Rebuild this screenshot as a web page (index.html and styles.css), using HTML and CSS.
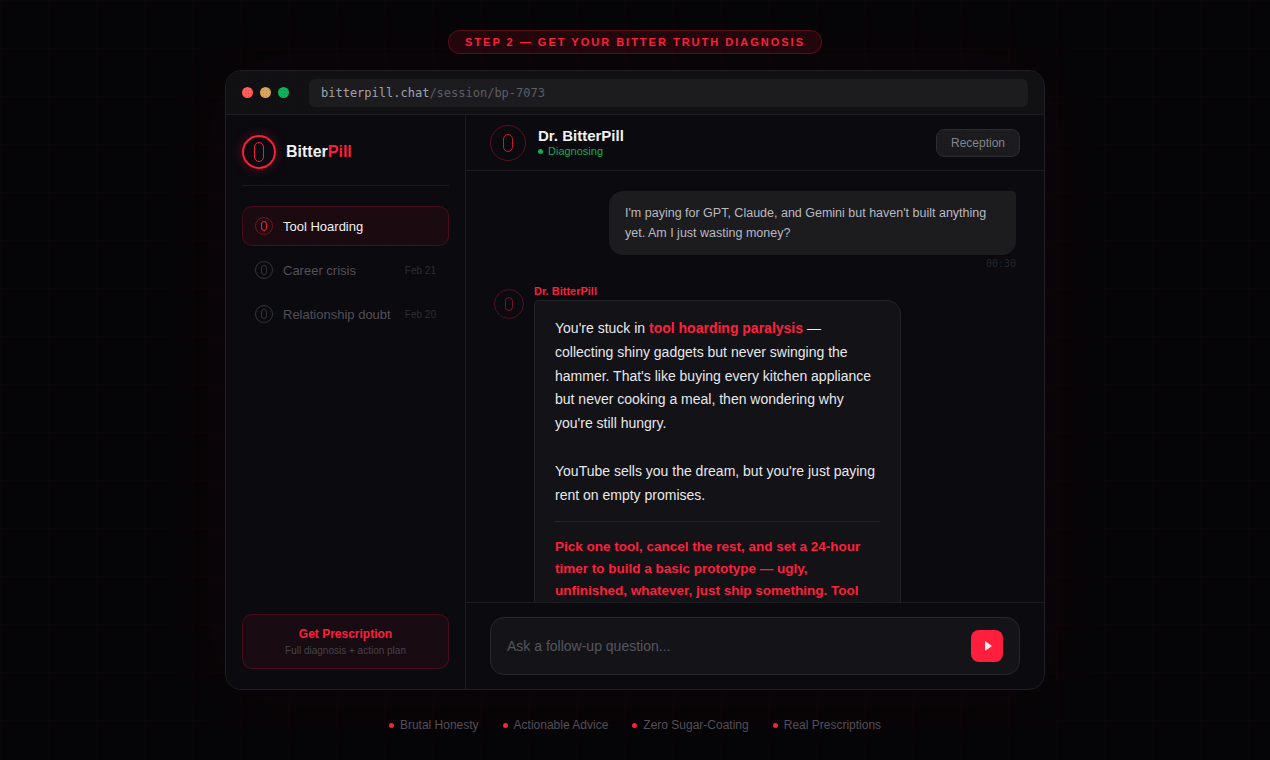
FILE: index.html
```html
<!DOCTYPE html>
<html>

<head>
    <meta content="text/html; charset=utf-8" http-equiv="Content-Type">
    <title>BitterPill demo</title>
    <link rel="stylesheet" href="styles.css">
</head>

<body>
    <div class="stepBadge">STEP 2 — GET YOUR BITTER TRUTH DIAGNOSIS</div>

    <div class="appWindow">
        <div class="titleBar">
            <span class="winDot dotRed"></span>
            <span class="winDot dotAmber"></span>
            <span class="winDot dotGreen"></span>
            <div class="urlBar">bitterpill.chat<span class="urlPath">/session/bp-7073</span></div>
        </div>

        <div class="appBody">
            <div class="sidebar">
                <div class="brand">
                    <span class="pillIcon brandIcon"><i></i></span>
                    <span class="brandName">Bitter<b>Pill</b></span>
                </div>

                <div class="sessionList">
                    <div class="sessionItem active">
                        <span class="pillIcon sessionIcon"><i></i></span>
                        <span class="sessionName">Tool Hoarding</span>
                    </div>
                    <div class="sessionItem">
                        <span class="pillIcon sessionIcon"><i></i></span>
                        <span class="sessionName">Career crisis</span>
                        <span class="sessionDate">Feb 21</span>
                    </div>
                    <div class="sessionItem">
                        <span class="pillIcon sessionIcon"><i></i></span>
                        <span class="sessionName">Relationship doubt</span>
                        <span class="sessionDate">Feb 20</span>
                    </div>
                </div>

                <div class="prescription">
                    <div class="prescriptionTitle">Get Prescription</div>
                    <div class="prescriptionSub">Full diagnosis + action plan</div>
                </div>
            </div>

            <div class="chat">
                <div class="chatHeader">
                    <span class="pillIcon doctorIcon"><i></i></span>
                    <div class="doctorInfo">
                        <div class="doctorName">Dr. BitterPill</div>
                        <div class="doctorStatus"><span class="statusDot"></span>Diagnosing</div>
                    </div>
                    <button class="receptionBtn">Reception</button>
                </div>

                <div class="messages">
                    <div class="userMessage">
                        <div class="userBubble">I'm paying for GPT, Claude, and Gemini but haven't built anything yet. Am I just wasting money?</div>
                        <div class="msgTime">00:30</div>
                    </div>

                    <div class="aiMessage">
                        <span class="pillIcon aiIcon"><i></i></span>
                        <div class="aiContent">
                            <div class="aiLabel">Dr. BitterPill</div>
                            <div class="aiBubble">
                                <p>You're stuck in <strong>tool hoarding paralysis</strong> — collecting shiny gadgets but never swinging the hammer. That's like buying every kitchen appliance but never cooking a meal, then wondering why you're still hungry.</p>
                                <p>YouTube sells you the dream, but you're just paying rent on empty promises.</p>
                                <div class="aiDivider"></div>
                                <p class="aiVerdict">Pick one tool, cancel the rest, and set a 24-hour timer to build a basic prototype — ugly, unfinished, whatever, just ship something. Tool</p>
                            </div>
                        </div>
                    </div>
                </div>

                <div class="inputArea">
                    <div class="inputBox">
                        <span class="inputPlaceholder">Ask a follow-up question...</span>
                        <button class="sendBtn">
                            <svg width="10" height="10" viewBox="0 0 10 10"><path d="M3 0 L10 5 L3 10 Z" fill="#eeeeee"/></svg>
                        </button>
                    </div>
                </div>
            </div>
        </div>
    </div>

    <div class="featureRow">
        <span class="feature">Brutal Honesty</span>
        <span class="feature">Actionable Advice</span>
        <span class="feature">Zero Sugar-Coating</span>
        <span class="feature">Real Prescriptions</span>
    </div>
</body>

</html>
```

FILE: styles.css
```css
* {
    box-sizing: border-box;
}

html, body {
    height: 100%;
}

body {
    margin: 0;
    height: 760px;
    overflow: hidden;
    padding-top: 30px;
    display: flex;
    flex-direction: column;
    align-items: center;
    font-family: "Liberation Sans", Arial, sans-serif;
    color: #f4f4f5;
    background-color: #050507;
    background-image:
        linear-gradient(rgba(255, 30, 60, 0.018) 1px, transparent 1px),
        linear-gradient(90deg, rgba(255, 30, 60, 0.018) 1px, transparent 1px);
    background-size: 48px 48px;
}

.stepBadge {
    height: 24px;
    line-height: 22px;
    padding: 0 16px;
    border: 1px solid rgba(255, 30, 60, 0.25);
    border-radius: 12px;
    background: rgba(255, 30, 60, 0.11);
    color: #ff1f3d;
    font-size: 11px;
    font-weight: 700;
    letter-spacing: 2px;
    white-space: nowrap;
}

.appWindow {
    position: relative;
    width: 820px;
    height: 620px;
    margin-top: 16px;
    flex-shrink: 0;
    display: flex;
    flex-direction: column;
    border: 1px solid #1f1f24;
    border-radius: 16px;
    overflow: hidden;
    background: #0a0a0f;
    box-shadow: 0 0 80px rgba(255, 30, 60, 0.05);
}

.appWindow::after {
    content: "";
    position: absolute;
    inset: 0;
    pointer-events: none;
    background-image: radial-gradient(rgba(0, 0, 0, 0.16) 1px, transparent 1px);
    background-size: 3px 3px;
}

.titleBar {
    height: 44px;
    flex-shrink: 0;
    display: flex;
    align-items: center;
    gap: 7px;
    padding: 0 16px;
    background: #111114;
    border-bottom: 1px solid #1f1f24;
}

.winDot {
    width: 11px;
    height: 11px;
    border-radius: 50%;
}

.dotRed {
    background: #ff5f57;
}

.dotAmber {
    background: #d9a55b;
}

.dotGreen {
    background: #12b05c;
}

.urlBar {
    position: relative;
    z-index: 1;
    flex: 1;
    height: 28px;
    line-height: 28px;
    margin-left: 13px;
    padding: 0 12px;
    border-radius: 6px;
    background: #1c1c1f;
    color: #a1a1aa;
    font-family: "DejaVu Sans Mono", monospace;
    font-size: 12px;
    white-space: nowrap;
}

.urlPath {
    color: #5c5c66;
}

.appBody {
    flex: 1;
    min-height: 0;
    display: flex;
}

.sidebar {
    width: 240px;
    flex-shrink: 0;
    display: flex;
    flex-direction: column;
    padding: 20px 16px;
    border-right: 1px solid #1c1c21;
    background: #0a0a0f;
}

.brand {
    display: flex;
    align-items: center;
    gap: 10px;
    padding-bottom: 16px;
    border-bottom: 1px solid #1c1c21;
}

.brandName {
    font-size: 16px;
    font-weight: 700;
    color: #f4f4f5;
}

.brandName b {
    color: #ff1f3d;
}

.pillIcon {
    display: flex;
    align-items: center;
    justify-content: center;
    flex-shrink: 0;
    border-radius: 50%;
    border: 1px solid #ff1f3d;
}

.pillIcon i {
    display: block;
    border: 1px solid #ff1f3d;
}

.brandIcon {
    width: 34px;
    height: 34px;
    border-width: 2px;
    box-shadow: 0 0 12px rgba(255, 30, 60, 0.3);
}

.brandIcon i {
    width: 10px;
    height: 20px;
    border-width: 1.5px;
    border-radius: 5px;
}

.sessionList {
    margin-top: 20px;
    display: flex;
    flex-direction: column;
    gap: 4px;
    flex: 1;
}

.sessionItem {
    height: 40px;
    display: flex;
    align-items: center;
    gap: 10px;
    padding: 0 12px;
    border: 1px solid transparent;
    border-radius: 10px;
    color: #54505a;
    font-size: 13px;
}

.sessionItem.active {
    background: rgba(255, 30, 60, 0.07);
    border-color: rgba(255, 30, 60, 0.2);
    color: #f4f4f5;
}

.sessionName {
    flex: 1;
    white-space: nowrap;
}

.sessionDate {
    color: #2e2e35;
    font-size: 10px;
    white-space: nowrap;
}

.sessionIcon {
    width: 18px;
    height: 18px;
    border-color: #34343b;
}

.sessionIcon i {
    width: 6px;
    height: 10px;
    border-color: #34343b;
    border-radius: 3px;
}

.active .sessionIcon {
    border-color: rgba(255, 30, 60, 0.4);
}

.active .sessionIcon i {
    border-color: #ff1f3d;
}

.prescription {
    position: relative;
    z-index: 1;
    height: 55px;
    padding-top: 12px;
    text-align: center;
    border: 1px solid rgba(255, 30, 60, 0.2);
    border-radius: 10px;
    background: rgba(255, 30, 60, 0.06);
}

.prescriptionTitle {
    color: #ff1f3d;
    font-size: 12px;
    font-weight: 700;
    line-height: 14px;
}

.prescriptionSub {
    margin-top: 3px;
    color: #44444e;
    font-size: 10px;
    line-height: 13px;
}

.chat {
    flex: 1;
    min-width: 0;
    display: flex;
    flex-direction: column;
}

.chatHeader {
    height: 56px;
    flex-shrink: 0;
    display: flex;
    align-items: center;
    gap: 12px;
    padding: 0 24px;
    border-bottom: 1px solid #1c1c21;
}

.doctorIcon {
    width: 36px;
    height: 36px;
    border-color: rgba(255, 30, 60, 0.35);
}

.doctorIcon i {
    width: 10px;
    height: 18px;
    border-color: rgba(255, 30, 60, 0.8);
    border-radius: 5px;
}

.doctorInfo {
    flex: 1;
}

.doctorName {
    font-size: 15px;
    font-weight: 700;
    line-height: 17px;
}

.doctorStatus {
    display: flex;
    align-items: center;
    gap: 5px;
    color: #12b05c;
    font-size: 11px;
    line-height: 14px;
}

.statusDot {
    width: 5px;
    height: 5px;
    border-radius: 50%;
    background: #12b05c;
}

.receptionBtn {
    width: 84px;
    height: 28px;
    padding: 0;
    border: 1px solid #2c2c32;
    border-radius: 8px;
    background: #1c1c1f;
    color: #85858f;
    font-family: inherit;
    font-size: 12px;
}

.messages {
    flex: 1;
    min-height: 0;
    overflow: hidden;
    padding: 20px 28px 0 28px;
}

.userMessage {
    display: flex;
    flex-direction: column;
    align-items: flex-end;
}

.userBubble {
    position: relative;
    z-index: 1;
    width: 407px;
    padding: 12px 16px;
    border-radius: 14px 4px 14px 14px;
    background: #1c1c1f;
    color: #b9b9c0;
    font-size: 12.5px;
    line-height: 20px;
}

.msgTime {
    margin-top: 2px;
    color: #26262d;
    font-family: "DejaVu Sans Mono", monospace;
    font-size: 10px;
    line-height: 14px;
}

.aiMessage {
    display: flex;
    gap: 10px;
    margin-top: 13px;
}

.aiIcon {
    width: 30px;
    height: 30px;
    margin-top: 5px;
    border-color: rgba(255, 30, 60, 0.3);
}

.aiIcon i {
    width: 8px;
    height: 14px;
    border-color: rgba(255, 30, 60, 0.45);
    border-radius: 4px;
}

.aiLabel {
    color: #ff1f3d;
    font-size: 11px;
    font-weight: 700;
    line-height: 14px;
    margin-bottom: 2px;
}

.aiBubble {
    position: relative;
    z-index: 1;
    width: 367px;
    height: 320px;
    padding: 16px 20px;
    border: 1px solid #232328;
    border-radius: 4px 14px 14px 14px;
    background: #121217;
    font-size: 14px;
    line-height: 23.8px;
    color: #e8e8ea;
}

.aiBubble p {
    margin: 0 0 24px 0;
}

.aiBubble strong {
    color: #ff1f3d;
}

.aiDivider {
    height: 1px;
    margin: -11px 0 14px 0;
    background: #232328;
}

.aiBubble .aiVerdict {
    margin: 0;
    color: #ff1f3d;
    font-size: 13.5px;
    font-weight: 700;
    line-height: 22px;
}

.inputArea {
    height: 87px;
    flex-shrink: 0;
    padding: 14px 24px 0 24px;
    border-top: 1px solid #1c1c21;
}

.inputBox {
    position: relative;
    z-index: 1;
    height: 58px;
    display: flex;
    align-items: center;
    justify-content: space-between;
    padding: 0 16px;
    border: 1px solid #26262c;
    border-radius: 14px;
    background: #141418;
}

.inputPlaceholder {
    color: #55555f;
    font-size: 14px;
}

.sendBtn {
    width: 32px;
    height: 32px;
    padding: 0;
    display: flex;
    align-items: center;
    justify-content: center;
    border: 0;
    border-radius: 8px;
    background: #ff1f3d;
}

.featureRow {
    display: flex;
    gap: 24px;
    margin-top: 27px;
    color: #54505a;
    font-size: 12px;
    line-height: 16px;
}

.feature {
    display: flex;
    align-items: center;
    gap: 6px;
}

.feature::before {
    content: "";
    width: 5px;
    height: 5px;
    border-radius: 50%;
    background: #ff1f3d;
}
```
